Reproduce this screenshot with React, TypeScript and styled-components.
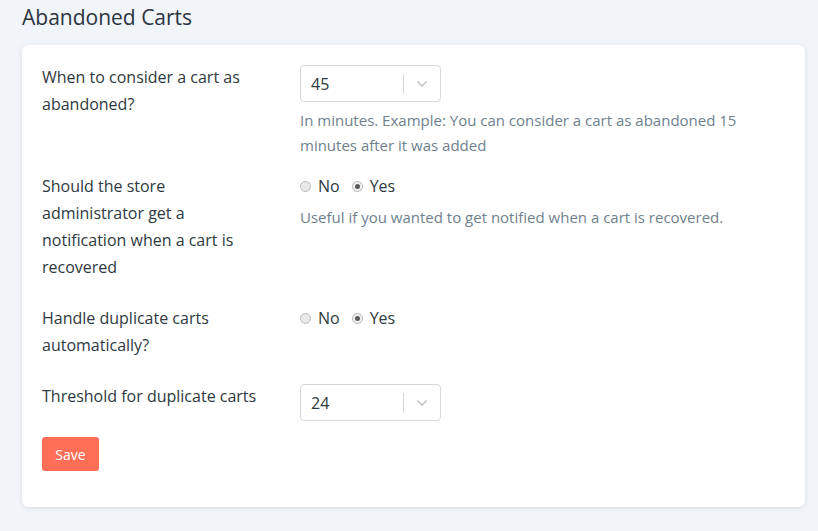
import React from "react";
import styled, { createGlobalStyle } from "styled-components";

const Global = createGlobalStyle`
  html, body { margin: 0; padding: 0; background: #f1f4f8; }
  body { font-family: "Open Sans", "Noto Sans", sans-serif; color: #2f3941; }
  * { box-sizing: border-box; }
`;

const Page = styled.div`
  padding: 3px 13px 24px 22px;
`;

const Title = styled.h1`
  margin: 0 0 14px 0;
  font-size: 21px;
  font-weight: 400;
  line-height: 28px;
  color: #2b3440;
`;

const Card = styled.div`
  background: #fff;
  border-radius: 6px;
  box-shadow: 0 1px 4px rgba(40, 60, 80, 0.12);
  padding: 18.5px 20px 36px 20px;
`;

const Row = styled.div`
  display: grid;
  grid-template-columns: 258px 1fr;
  margin-bottom: 15px;
`;

const Label = styled.div`
  font-size: 16px;
  line-height: 27px;
  max-width: 222px;
  padding-bottom: 9px;
  color: #2f3941;
`;

const Control = styled.div<{ $offset?: number }>`
  padding-top: ${(p) => p.$offset ?? 0}px;
`;

const SelectBox = styled.div`
  width: 141px;
  height: 37px;
  border: 1px solid #d3d8dd;
  border-radius: 4px;
  display: flex;
  align-items: center;
`;

const SelectValue = styled.span`
  flex: 1;
  padding-left: 10px;
  font-size: 16px;
  color: #2f3941;
`;

const Separator = styled.span`
  width: 1px;
  height: 20px;
  background: #d6d6d6;
`;

const Chevron = styled.span`
  width: 36px;
  display: flex;
  justify-content: center;
  align-items: center;
`;

const Help = styled.div<{ $top: number }>`
  margin-top: ${(p) => p.$top}px;
  font-size: 15px;
  line-height: 25px;
  color: #6f7f8e;
`;

const RadioGroup = styled.div`
  display: flex;
  align-items: center;
  height: 27px;
  font-size: 16px;
  color: #2f3941;
`;

const RadioItem = styled.label`
  display: flex;
  align-items: center;
  margin-right: 12px;
`;

const Dot = styled.span<{ $checked?: boolean }>`
  width: 11px;
  height: 11px;
  border-radius: 50%;
  border: 1px solid #b9b9b9;
  background: ${(p) => (p.$checked ? "#f0f0f0" : "#e9e9e9")};
  margin-right: 7px;
  display: flex;
  align-items: center;
  justify-content: center;
  &::after {
    content: "";
    display: ${(p) => (p.$checked ? "block" : "none")};
    width: 5px;
    height: 5px;
    border-radius: 50%;
    background: #5a5a5a;
  }
`;

const SaveButton = styled.button`
  margin-top: 1px;
  width: 57px;
  height: 34px;
  border: none;
  border-radius: 3px;
  background: #ff6f57;
  color: #fff;
  font-family: "Open Sans", "Noto Sans", sans-serif;
  font-size: 14px;
  padding: 0;
`;

function Select({ value }: { value: string }) {
  return (
    <SelectBox>
      <SelectValue>{value}</SelectValue>
      <Separator />
      <Chevron>
        <svg width="12" height="8" viewBox="0 0 12 8">
          <path d="M1.5 1.5 L6 6 L10.5 1.5" fill="none" stroke="#c4c4c4" strokeWidth="1.6" />
        </svg>
      </Chevron>
    </SelectBox>
  );
}

function Radios() {
  return (
    <RadioGroup>
      <RadioItem>
        <Dot />
        No
      </RadioItem>
      <RadioItem>
        <Dot $checked />
        Yes
      </RadioItem>
    </RadioGroup>
  );
}

export default function App() {
  return (
    <Page>
      <Global />
      <Title>Abandoned Carts</Title>
      <Card>
        <Row>
          <Label>When to consider a cart as abandoned?</Label>
          <Control $offset={1.5}>
            <Select value="45" />
            <Help $top={5.5}>
              In minutes. Example: You can consider a cart as abandoned 15 minutes after it was added
            </Help>
          </Control>
        </Row>
        <Row>
          <Label>Should the store administrator get a notification when a cart is recovered</Label>
          <Control>
            <Radios />
            <Help $top={5}>Useful if you wanted to get notified when a cart is recovered.</Help>
          </Control>
        </Row>
        <Row>
          <Label>Handle duplicate carts automatically?</Label>
          <Control>
            <Radios />
          </Control>
        </Row>
        <Row>
          <Label>Threshold for duplicate carts</Label>
          <Control $offset={1.5}>
            <Select value="24" />
          </Control>
        </Row>
        <SaveButton>Save</SaveButton>
      </Card>
    </Page>
  );
}
